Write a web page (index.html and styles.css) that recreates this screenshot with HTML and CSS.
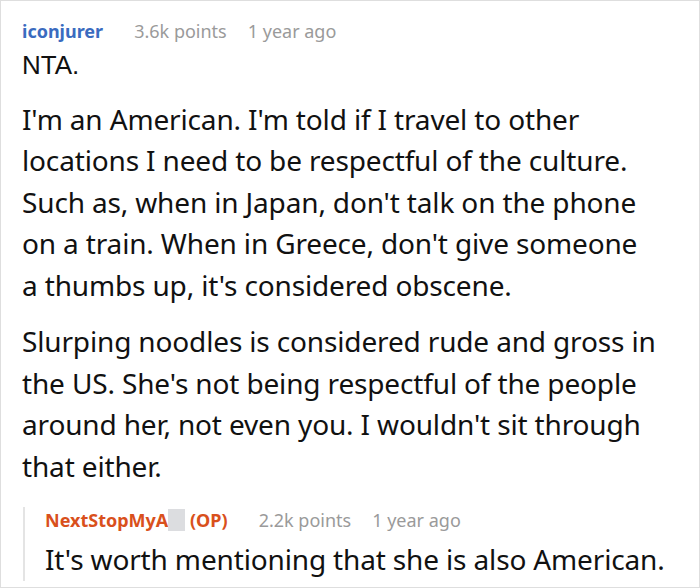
FILE: index.html
```html
<!DOCTYPE html>
<html>
<head>
<meta charset="utf-8">
<link rel="stylesheet" href="styles.css">
</head>
<body>
<div class="frame">
  <div class="comment">
    <div class="meta">
      <span class="user">iconjurer</span>
      <span class="info points">3.6k points</span>
      <span class="info">1 year ago</span>
    </div>
    <div class="body">
      <p class="short">NTA.</p>
      <p>I'm an American. I'm told if I travel to other locations I need to be respectful of the culture. Such as, when in Japan, don't talk on the phone on a train. When in Greece, don't give someone <span class="nw">a thumbs</span> up, it's considered obscene.</p>
      <p>Slurping noodles is considered rude and gross in the US. She's not being respectful of the people around her, not even you. I wouldn't sit through that either.</p>
    </div>
    <div class="reply">
      <div class="meta">
        <span class="user op">NextStopMyA<span class="redact"></span> (OP)</span>
        <span class="info points">2.2k points</span>
        <span class="info">1 year ago</span>
      </div>
      <div class="body">
        <p>It's worth mentioning that she is also American.</p>
      </div>
    </div>
  </div>
</div>
</body>
</html>
```

FILE: styles.css
```css
html, body {
  margin: 0;
  padding: 0;
  background: #fff;
}
.frame {
  width: 700px;
  height: 588px;
  box-sizing: border-box;
  border: 1px solid #dedede;
  overflow: hidden;
  font-family: "Noto Sans", "Open Sans", sans-serif;
  color: #111;
}
.comment {
  padding: 17px 38px 0 21px;
}
.meta {
  display: flex;
  gap: 21px;
  font-size: 18px;
  line-height: 26px;
  align-items: baseline;
}
.meta .points {
  margin-left: 10px;
}
.user {
  color: #3a6bbf;
  font-weight: bold;
}
.user.op {
  color: #d9501c;
}
.redact {
  display: inline-block;
  width: 17px;
  height: 22px;
  background: #dcdde0;
  vertical-align: -4px;
}
.info {
  color: #9a9a9a;
}
.body {
  font-size: 28px;
  line-height: 41.5px;
  letter-spacing: -0.15px;
  margin-top: 1px;
}
.body p {
  margin: 0 0 15px;
}
.body p.short {
  font-family: "Liberation Sans", Arial, sans-serif;
  font-size: 26px;
  letter-spacing: 0;
  margin-bottom: 12px;
}
.nw {
  white-space: nowrap;
}
.reply {
  margin-top: 20px;
  margin-left: 1px;
  margin-right: -30px;
  border-left: 2px solid #e4e4e4;
  padding-left: 20px;
}
.reply .meta {
  margin-bottom: 6px;
}
.reply .body p {
  margin: 0;
}
```
